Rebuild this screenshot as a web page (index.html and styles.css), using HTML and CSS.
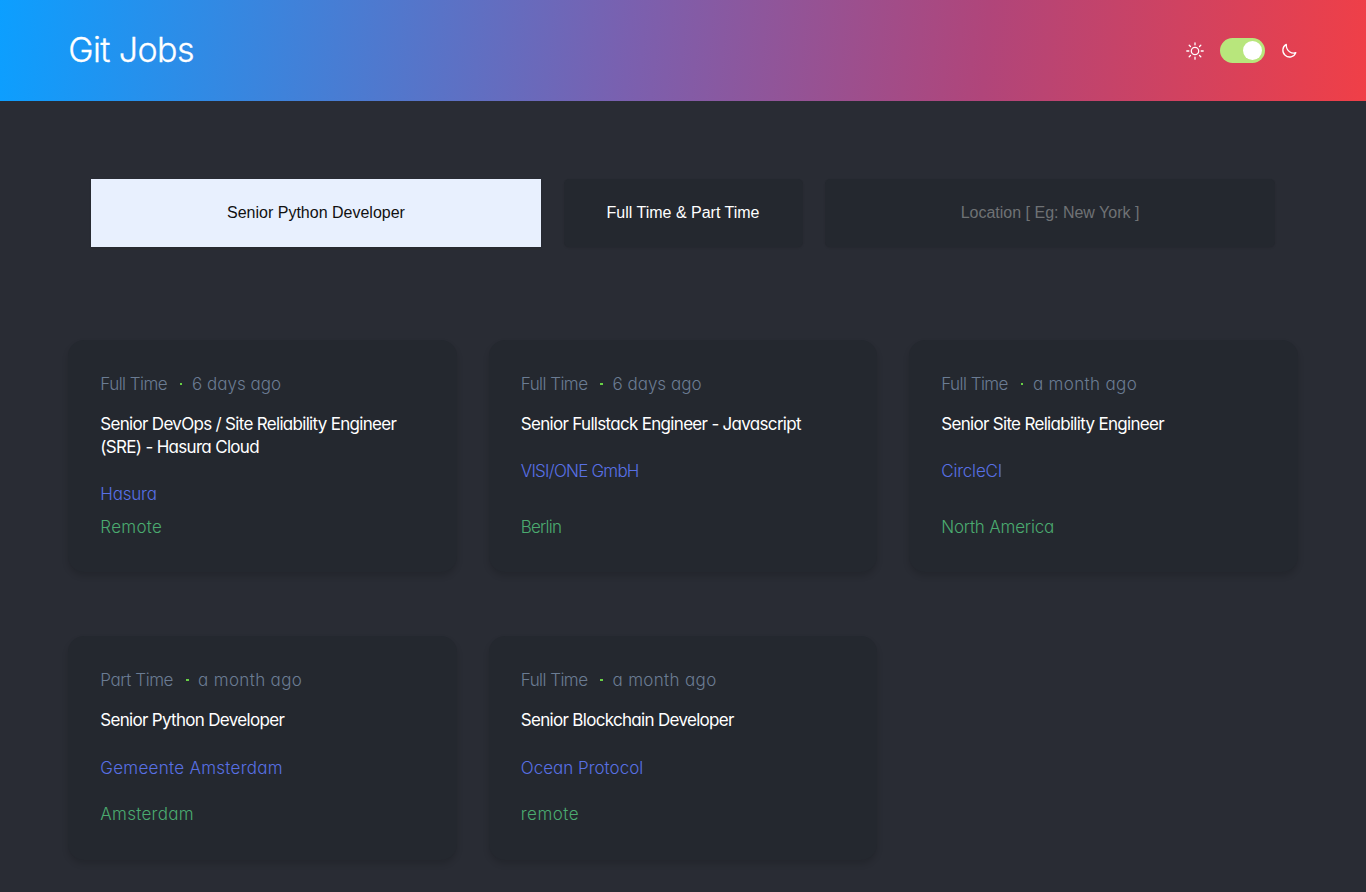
FILE: index.html
```html
<!DOCTYPE html>
<html lang="en">
<head>
<meta charset="utf-8">
<title>Git Jobs</title>
<link rel="stylesheet" href="styles.css">
</head>
<body>
<header class="header">
  <h1 class="brand">Git Jobs</h1>
  <div class="theme">
    <svg class="sun" viewBox="0 0 18 18" width="18" height="18"><circle cx="9" cy="9" r="3.7"/><path d="M9 .8v2M9 15.2v2M.8 9h2M15.2 9h2M3.2 3.2l1.3 1.3M13.5 13.5l1.3 1.3M3.2 14.8l1.3-1.3M13.5 4.5l1.3-1.3"/></svg>
    <span class="switch"><span class="knob"></span></span>
    <svg class="moon" viewBox="0 0 16 16" width="16" height="16"><path d="M5.3 1.4A6.7 6.7 0 1 0 14.8 9.7C11 11 5 8.500 5.300 1.400Z"/></svg>
  </div>
</header>
<main class="main">
  <form class="search">
    <input class="field filled" type="text" value="Senior Python Developer">
    <button class="field kind" type="button">Full Time &amp; Part Time</button>
    <input class="field" type="text" placeholder="Location [ Eg: New York ]">
  </form>
  <section class="jobs">
    <article class="card">
      <p class="meta"><span class="type">Full Time</span><i class="dot"></i><span class="ago days">6 days ago</span></p>
      <h2 class="title">Senior DevOps / Site Reliability Engineer<br>(SRE) - Hasura Cloud</h2>
      <p class="company snug">Hasura</p>
      <p class="location loose">Remote</p>
    </article>
    <article class="card">
      <p class="meta"><span class="type">Full Time</span><i class="dot"></i><span class="ago days">6 days ago</span></p>
      <h2 class="title">Senior Fullstack Engineer - Javascript</h2>
      <p class="company tight">VISI/ONE GmbH</p>
      <p class="location tight">Berlin</p>
    </article>
    <article class="card">
      <p class="meta"><span class="type">Full Time</span><i class="dot"></i><span class="ago">a month ago</span></p>
      <h2 class="title">Senior Site Reliability Engineer</h2>
      <p class="company snug">CircleCI</p>
      <p class="location snug">North America</p>
    </article>
    <article class="card short">
      <p class="meta"><span class="type part">Part Time</span><i class="dot"></i><span class="ago">a month ago</span></p>
      <h2 class="title">Senior Python Developer</h2>
      <p class="company loose">Gemeente Amsterdam</p>
      <p class="location loose">Amsterdam</p>
    </article>
    <article class="card short">
      <p class="meta"><span class="type">Full Time</span><i class="dot"></i><span class="ago">a month ago</span></p>
      <h2 class="title">Senior Blockchain Developer</h2>
      <p class="company">Ocean Protocol</p>
      <p class="location looser">remote</p>
    </article>
  </section>
</main>
</body>
</html>
```
FILE: styles.css
```css
* { box-sizing: border-box; margin: 0; padding: 0; }
body {
  height: 892px;
  overflow: hidden;
  background: #292c34;
  font-family: Inter, "Open Sans", sans-serif;
  font-feature-settings: "cv11" 1;
  font-weight: 300;
  font-size: 17px;
  color: #fff;
}
.header {
  height: 101px;
  padding: 0 5%;
  display: flex;
  justify-content: space-between;
  align-items: center;
  background: linear-gradient(95deg, #0c9fff, #7a60af 46%, #b0457a 72%, #f03f47);
}
.brand { font-size: 34px; font-weight: 300; letter-spacing: -0.6px; line-height: 50px; padding-bottom: 2px; -webkit-text-stroke: 0.3px #fff; }
.theme { display: flex; align-items: center; padding-right: 1px; }
.theme svg { fill: none; stroke: #fff; stroke-width: 1.3; stroke-linecap: round; stroke-linejoin: round; }
.switch {
  width: 45px; height: 25px; margin: 0 16px 0 15.500px;
  border-radius: 13px; background: #b8e67c;
  display: flex; justify-content: flex-end; align-items: center; padding-right: 3px;
}
.knob { width: 19px; height: 19px; border-radius: 50%; background: #fff; }
.main { padding: 78px 5% 0; }
.search { display: grid; grid-template-columns: 450px 239px 450px; justify-content: space-between; padding: 0 22.700px; }
.field {
  height: 68px; border: 0; border-radius: 5px;
  background: #24282f; color: #fff;
  font: 16px "Liberation Sans", Arial, sans-serif;
  text-align: center;
  box-shadow: 0 1px 2px rgba(0, 0, 0, .1);
}
.field::placeholder { color: #6f7275; }
.filled { background: #e8f0fe; color: #111; border-radius: 0; }
.jobs {
  margin-top: 93px;
  display: grid;
  grid-template-columns: repeat(3, 1fr);
  grid-template-rows: 232px 224px;
  gap: 64px 32px;
}
.card {
  display: flex; flex-direction: column;
  padding: 32px 32px 33px;
  border-radius: 16px;
  background: #24282f;
  box-shadow: 0 4px 6px rgba(0, 0, 0, .14);
}
.short { padding-bottom: 34px; }
.meta { display: flex; align-items: center; height: 24px; color: #6b7c93; }
.type { letter-spacing: -0.55px; }
.part { letter-spacing: -0.42px; }
.ago { letter-spacing: 0.35px; }
.days { letter-spacing: 0; }
.dot { width: 2.500px; height: 2.500px; margin: 0 9.500px 0 13px; background: #68d045; }
.title { margin-top: 17px; font-size: 17px; font-weight: 400; line-height: 23px; letter-spacing: -0.69px; }
.company { margin-top: 23px; line-height: 24px; color: #5870e4; }
.short .company { margin-top: 24px; }
.location { margin-top: auto; line-height: 24px; color: #4bab70; }
.tight { letter-spacing: -0.78px; }
.snug { letter-spacing: -0.2px; }
.loose { letter-spacing: 0.28px; }
.looser { letter-spacing: 0.5px; }
```
